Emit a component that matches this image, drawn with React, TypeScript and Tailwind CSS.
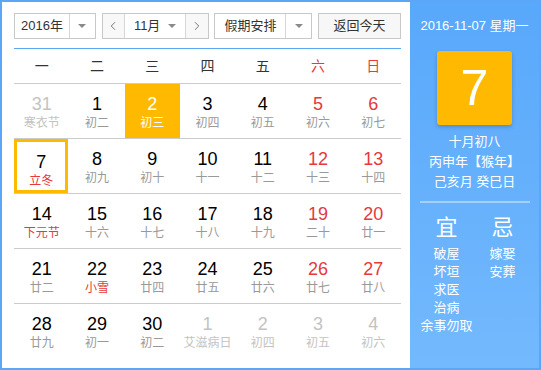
import { ChevronLeft, ChevronRight } from 'lucide-react';

type Day = { d: number; l: string; other?: boolean; red?: boolean; lred?: boolean; sel?: boolean; today?: boolean };

const weeks: Day[][] = [
  [
    { d: 31, l: '寒衣节', other: true },
    { d: 1, l: '初二' },
    { d: 2, l: '初三', sel: true },
    { d: 3, l: '初四' },
    { d: 4, l: '初五' },
    { d: 5, l: '初六', red: true },
    { d: 6, l: '初七', red: true },
  ],
  [
    { d: 7, l: '立冬', lred: true, today: true },
    { d: 8, l: '初九' },
    { d: 9, l: '初十' },
    { d: 10, l: '十一' },
    { d: 11, l: '十二' },
    { d: 12, l: '十三', red: true },
    { d: 13, l: '十四', red: true },
  ],
  [
    { d: 14, l: '下元节', lred: true },
    { d: 15, l: '十六' },
    { d: 16, l: '十七' },
    { d: 17, l: '十八' },
    { d: 18, l: '十九' },
    { d: 19, l: '二十', red: true },
    { d: 20, l: '廿一', red: true },
  ],
  [
    { d: 21, l: '廿二' },
    { d: 22, l: '小雪', lred: true },
    { d: 23, l: '廿四' },
    { d: 24, l: '廿五' },
    { d: 25, l: '廿六' },
    { d: 26, l: '廿七', red: true },
    { d: 27, l: '廿八', red: true },
  ],
  [
    { d: 28, l: '廿九' },
    { d: 29, l: '初一' },
    { d: 30, l: '初二' },
    { d: 1, l: '艾滋病日', other: true },
    { d: 2, l: '初四', other: true },
    { d: 3, l: '初五', other: true },
    { d: 4, l: '初六', other: true },
  ],
];

const Caret = () => (
  <span className="block w-0 h-0 border-l-[4px] border-r-[4px] border-t-[4px] border-l-transparent border-r-transparent border-t-[#8a8a8a]" />
);

const DayCell = ({ day }: { day: Day }) => {
  let num = 'text-black';
  let lun = 'text-[#999]';
  if (day.red) num = 'text-[#e5393c]';
  if (day.lred) lun = 'text-[#e5393c]';
  if (day.other) {
    num = 'text-[#c3c3c3]';
    lun = 'text-[#c3c3c3]';
  }
  if (day.sel) {
    num = 'text-white';
    lun = 'text-white';
  }
  return (
    <div
      className={`h-[54px] flex flex-col items-center pt-[9px] ${day.sel ? 'bg-[#ffba00]' : ''} ${
        day.today ? 'border-[3px] border-[#ffba00] pt-[6px] mr-px' : ''
      }`}
    >
      <span className={`text-[18px] leading-[22px] ${num}`}>{day.d}</span>
      <span className={`text-[12px] leading-[16px] whitespace-nowrap ${lun}`}>{day.l}</span>
    </div>
  );
};

const App = () => {
  return (
    <div
      className="w-[541px] h-[370px] border-2 border-[#5ba6f6] flex bg-white"
      style={{ fontFamily: '"Liberation Sans", "Noto Sans CJK SC", sans-serif' }}
    >
      {/* Left: calendar */}
      <div className="w-[408px] pl-3 pr-[9px] pt-[11px]">
        {/* Toolbar */}
        <div className="flex h-[26px] text-[13px] text-[#333]">
          <div className="w-[82px] flex border border-[#c8c8c8]">
            <div className="w-[55px] flex items-center justify-center border-r border-[#d6d6d6]">2016年</div>
            <div className="flex-1 flex items-center justify-center">
              <Caret />
            </div>
          </div>
          <div className="ml-[6px] w-[108px] flex border border-[#c8c8c8]">
            <div className="w-[22px] flex items-center justify-center bg-[#f8f8f8] border-r border-[#d6d6d6]">
              <ChevronLeft size={14} strokeWidth={1.5} className="text-[#666]" />
            </div>
            <div className="flex-1 flex items-center justify-center gap-2">
              <span>11月</span>
              <Caret />
            </div>
            <div className="w-[23px] flex items-center justify-center bg-[#f8f8f8] border-l border-[#d6d6d6]">
              <ChevronRight size={14} strokeWidth={1.5} className="text-[#666]" />
            </div>
          </div>
          <div className="ml-[5px] w-[98px] flex border border-[#c8c8c8]">
            <div className="w-[71px] flex items-center justify-center border-r border-[#d6d6d6]">假期安排</div>
            <div className="flex-1 flex items-center justify-center">
              <Caret />
            </div>
          </div>
          <div className="ml-[6px] w-[83px] flex items-center justify-center border border-[#c8c8c8] bg-[#f7f7f7]">
            返回今天
          </div>
        </div>

        <div className="mt-[9px] h-px bg-[#5ba6f6]" />

        {/* Weekdays */}
        <div className="grid grid-cols-7 h-[34px] items-center text-[14px] text-[#333] text-center">
          {['一', '二', '三', '四', '五'].map((w) => (
            <span key={w}>{w}</span>
          ))}
          <span className="text-[#e5393c]">六</span>
          <span className="text-[#e5393c]">日</span>
        </div>

        {/* Weeks */}
        {weeks.map((week, i) => (
          <div key={i} className="grid grid-cols-7 border-t border-[#cccccc]">
            {week.map((day, j) => (
              <DayCell key={j} day={day} />
            ))}
          </div>
        ))}
      </div>

      {/* Right: today info */}
      <div className="flex-1 bg-gradient-to-b from-[#58a8fb] to-[#73b9fd] text-white flex flex-col items-center">
        <div className="mt-[16px] text-[13px] leading-[16px]">2016-11-07 星期一</div>
        <div className="mt-[17px] w-[75px] h-[74px] rounded-[3px] bg-[#ffba00] shadow-[0_2px_4px_rgba(0,0,0,0.2)] flex items-center justify-center">
          <span className="text-[50px] leading-none">7</span>
        </div>
        <div className="mt-[7px] text-[13px] leading-[20px] text-center">
          <div>十月初八</div>
          <div>丙申年【猴年】</div>
          <div>己亥月 癸巳日</div>
        </div>
        <div className="mt-[9px] w-[110px] h-[2px] bg-[#a4d0fc]" />
        <div className="mt-[13px] w-[112px] flex">
          <div className="w-[56px] flex flex-col items-center">
            <div className="text-[22px] leading-[24px] mb-[5px]">宜</div>
            {['破屋', '坏垣', '求医', '治病', '余事勿取'].map((t) => (
              <div key={t} className="text-[13px] leading-[18px] whitespace-nowrap">
                {t}
              </div>
            ))}
          </div>
          <div className="w-[56px] flex flex-col items-center">
            <div className="text-[22px] leading-[24px] mb-[5px]">忌</div>
            {['嫁娶', '安葬'].map((t) => (
              <div key={t} className="text-[13px] leading-[18px]">
                {t}
              </div>
            ))}
          </div>
        </div>
      </div>
    </div>
  );
};

export default App;
